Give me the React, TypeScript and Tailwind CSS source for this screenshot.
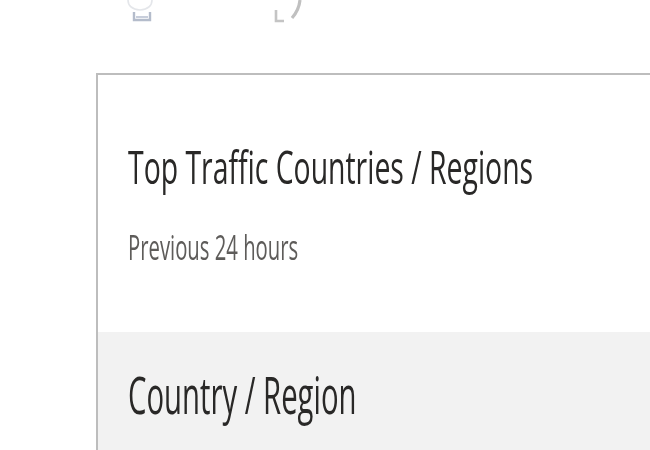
import React from "react";

// Faint partial glyphs peeking in from the toolbar above the card
function ToolbarRemnants() {
  return (
    <div className="relative h-[73px]">
      <svg className="absolute left-[124px] top-0 blur-[0.6px]" width="34" height="24" viewBox="0 0 34 24">
        <path d="M4 0 Q4 9 16 10 Q28 9 28 0" fill="none" stroke="#e4e6ea" strokeWidth="1.6" />
        <path d="M10 12 L10 20 L26 20 L26 12" fill="none" stroke="#b4bccb" strokeWidth="2.4" />
        <path d="M12 17 L24 17" stroke="#c8cedb" strokeWidth="2" />
      </svg>
      <svg className="absolute left-[270px] top-0 blur-[0.6px]" width="36" height="24" viewBox="0 0 36 24">
        <path d="M6 10 L6 21 L14 21" fill="none" stroke="#c4c4c4" strokeWidth="2.6" />
        <path d="M30 0 Q29 10 22 18" fill="none" stroke="#c0c0c0" strokeWidth="3.2" />
      </svg>
    </div>
  );
}

export default function App() {
  return (
    <div
      className="w-[650px] h-[450px] overflow-hidden bg-white"
      style={{ fontFamily: '"Open Sans", "Noto Sans", sans-serif' }}
    >
      <ToolbarRemnants />
      <div className="pl-[96px]">
        <div className="border-l-2 border-t-2 border-[#bdbdbd]">
          <div className="pl-[30px] pt-[69px]">
            <div className="h-[85px]">
              <span className="inline-block origin-top-left scale-y-[1.58] text-[28.4px] leading-none text-[#292827] whitespace-nowrap">
                Top Traffic Countries / Regions
              </span>
            </div>
            <div className="h-[103px]">
              <span className="inline-block origin-top-left scale-y-[1.72] text-[20.3px] leading-none text-[#5e5c5a] whitespace-nowrap">
                Previous 24 hours
              </span>
            </div>
          </div>
          <div className="bg-[#f2f2f2] h-[130px] pl-[30px] pt-[38px]">
            <span className="inline-block origin-top-left scale-y-[1.77] text-[29.3px] leading-none text-[#292827] whitespace-nowrap">
              Country / Region
            </span>
          </div>
        </div>
      </div>
    </div>
  );
}
